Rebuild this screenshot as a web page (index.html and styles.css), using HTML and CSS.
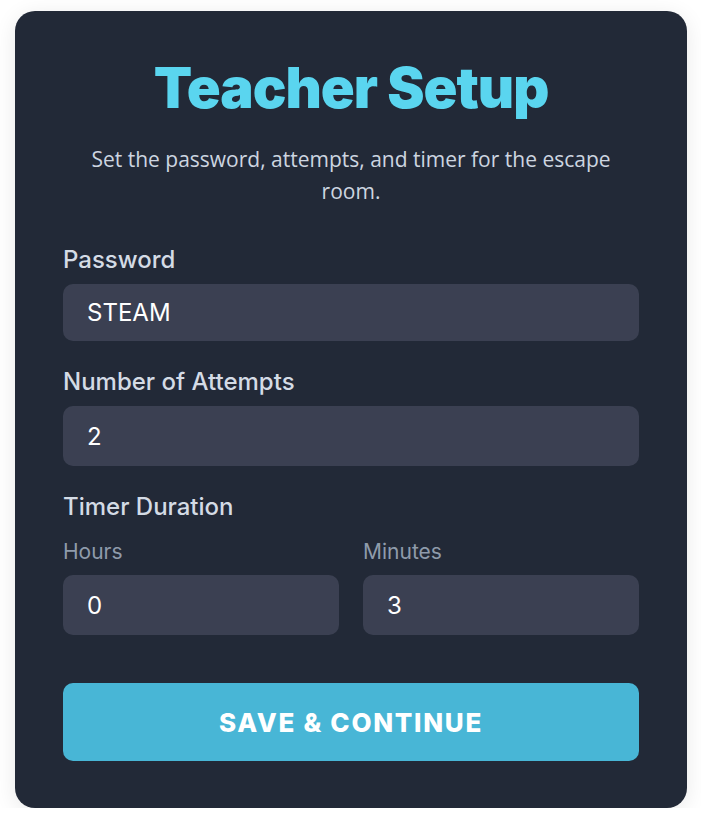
FILE: index.html
```html
<!DOCTYPE html>
<html lang="en">
<head>
<meta charset="utf-8">
<title>Teacher Setup</title>
<link rel="stylesheet" href="styles.css">
</head>
<body>
  <main class="setup-card">
    <h1 class="setup-title">Teacher Setup</h1>
    <p class="setup-intro">Set the password, attempts, and timer for the escape room.</p>

    <form class="setup-form">
      <div class="field">
        <label class="field-label" for="password">Password</label>
        <input class="field-input" id="password" type="text" value="STEAM">
      </div>

      <div class="field">
        <label class="field-label" for="attempts">Number of Attempts</label>
        <input class="field-input field-input--num" id="attempts" type="number" value="2">
      </div>

      <div class="field field--last">
        <span class="field-label field-label--group">Timer Duration</span>
        <div class="timer-grid">
          <div class="timer-part">
            <label class="sub-label" for="hours">Hours</label>
            <input class="field-input field-input--num" id="hours" type="number" value="0">
          </div>
          <div class="timer-part">
            <label class="sub-label" for="minutes">Minutes</label>
            <input class="field-input field-input--num" id="minutes" type="number" value="3">
          </div>
        </div>
      </div>

      <button class="save-btn" type="button">SAVE &amp; CONTINUE</button>
    </form>
  </main>
</body>
</html>
```

FILE: styles.css
```css
* {
  box-sizing: border-box;
}

html, body {
  margin: 0;
  background: #ffffff;
}

body {
  padding: 11px 14px 0 15px;
  font-family: Inter, "Liberation Sans", sans-serif;
}

.setup-card {
  background: #222937;
  border-radius: 20px;
  padding: 48px 48px 47px;
  box-shadow: 0 4px 22px rgba(0, 0, 0, 0.09);
}

.setup-title {
  margin: 0;
  text-align: center;
  font-family: Inter, sans-serif;
  font-weight: 900;
  font-size: 56px;
  line-height: 58px;
  letter-spacing: -1px;
  color: #5ad5ef;
}

.setup-intro {
  margin: 26px 24px 0;
  text-align: center;
  font-family: "Open Sans", sans-serif;
  font-size: 21px;
  line-height: 32px;
  color: #cdd5e0;
}

.setup-form {
  margin-top: 38px;
  display: flex;
  flex-direction: column;
}

.field {
  display: flex;
  flex-direction: column;
  margin-bottom: 26px;
}

.field--last {
  margin-bottom: 0;
}

.field-label {
  font-size: 24px;
  font-weight: 500;
  line-height: 30px;
  color: #d4dbe5;
  margin-bottom: 9px;
}

.field-label--group {
  margin-bottom: 17px;
}

.sub-label {
  font-size: 21px;
  font-weight: 400;
  line-height: 26px;
  color: #8f9bab;
  margin-bottom: 10px;
}

.field-input {
  width: 100%;
  height: 57px;
  border: none;
  border-radius: 10px;
  background: #3b4052;
  color: #ffffff;
  font-family: Inter, sans-serif;
  font-size: 24px;
  padding: 0 24px;
  outline: none;
}

.field-input--num {
  height: 60px;
  -moz-appearance: textfield;
}

.field-input--num::-webkit-outer-spin-button,
.field-input--num::-webkit-inner-spin-button {
  -webkit-appearance: none;
  margin: 0;
}

.timer-grid {
  display: grid;
  grid-template-columns: 1fr 1fr;
  gap: 24px;
}

.timer-part {
  display: flex;
  flex-direction: column;
}

.save-btn {
  margin-top: 48px;
  height: 78px;
  border: none;
  border-radius: 10px;
  background: #48b6d6;
  color: #ffffff;
  font-family: Inter, sans-serif;
  font-weight: 800;
  font-size: 26px;
  letter-spacing: 1.7px;
  cursor: pointer;
}
```
